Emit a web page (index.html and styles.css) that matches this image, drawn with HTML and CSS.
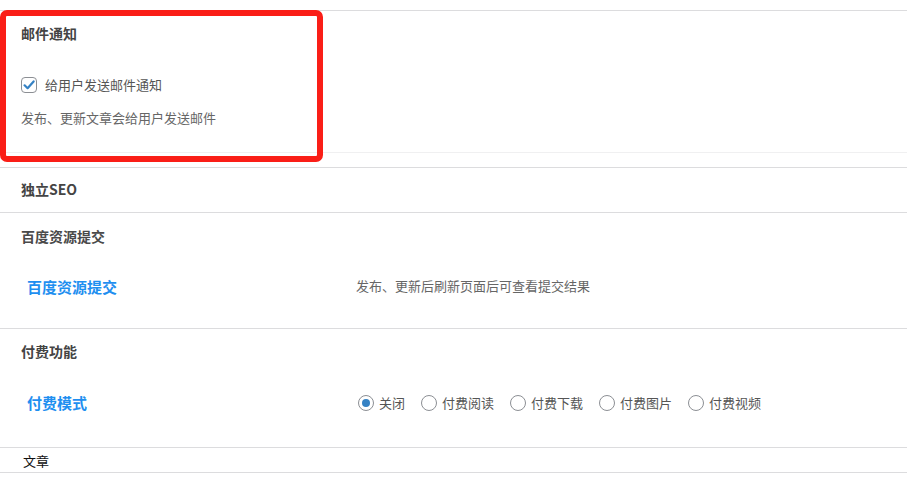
FILE: index.html
```html
<!DOCTYPE html>
<html lang="zh-CN">
<head>
<meta charset="utf-8">
<title>文章设置</title>
<link rel="stylesheet" href="styles.css">
</head>
<body>
<div class="page">
  <section class="box box-mail">
    <div class="mail-inner">
      <h3 class="box-title">邮件通知</h3>
      <label class="check-row">
        <span class="checkbox"><svg width="12" height="12" viewBox="0 0 12 12"><path d="M1.6 6.3 L4.6 9.2 L10.6 2.4" fill="none" stroke="#3582c4" stroke-width="2.2" stroke-linecap="round" stroke-linejoin="round"/></svg></span>
        <span class="check-label">给用户发送邮件通知</span>
      </label>
      <p class="desc">发布、更新文章会给用户发送邮件</p>
    </div>
    <div class="highlight"></div>
  </section>

  <section class="box box-seo">
    <h3 class="box-title">独立SEO</h3>
  </section>

  <section class="box box-baidu">
    <h3 class="box-title title-light">百度资源提交</h3>
    <div class="field-row">
      <div class="field-label">百度资源提交</div>
      <div class="field-value desc">发布、更新后刷新页面后可查看提交结果</div>
    </div>
  </section>

  <section class="box box-pay">
    <h3 class="box-title">付费功能</h3>
    <div class="field-row">
      <div class="field-label">付费模式</div>
      <div class="field-value radios">
        <label class="radio-item"><span class="radio checked"></span><span>关闭</span></label>
        <label class="radio-item"><span class="radio"></span><span>付费阅读</span></label>
        <label class="radio-item"><span class="radio"></span><span>付费下载</span></label>
        <label class="radio-item"><span class="radio"></span><span>付费图片</span></label>
        <label class="radio-item"><span class="radio"></span><span>付费视频</span></label>
      </div>
    </div>
  </section>

  <section class="box box-article">
    <div class="article-title">文章</div>
  </section>
</div>
</body>
</html>
```

FILE: styles.css
```css
* { box-sizing: border-box; }
html, body {
  margin: 0;
  padding: 0;
  background: #fff;
}
body {
  font-family: "Noto Sans CJK SC", "Microsoft YaHei", sans-serif;
  font-size: 13px;
  line-height: 20px;
  color: #555;
}
.page {
  padding-top: 10px;
}
.box {
  border-top: 1px solid #dcdcde;
  padding-left: 21px;
}
.box-title {
  margin: 0;
  font-size: 14px;
  line-height: 20px;
  font-weight: 700;
  color: #444;
}
.title-light {
  font-weight: 600;
  color: #4a4a4a;
}
.desc {
  margin: 0;
  color: #666;
  font-size: 13px;
  line-height: 20px;
}

/* mail */
.box-mail {
  position: relative;
  padding-left: 0;
  padding-bottom: 14px;
}
.mail-inner {
  padding: 12px 0 24px 21px;
  border-bottom: 1px solid #f0f0f1;
}
.check-row {
  display: flex;
  align-items: center;
  gap: 8px;
  margin-top: 32px;
  height: 20px;
  color: #555;
}
.checkbox {
  width: 16px;
  height: 16px;
  border: 1px solid #8c8f94;
  border-radius: 4px;
  display: flex;
  align-items: center;
  justify-content: center;
  background: #fff;
}
.check-row + .desc {
  margin-top: 13px;
}
.highlight {
  position: absolute;
  left: 0;
  top: -1px;
  width: 323px;
  height: 152px;
  border: 6px solid #fa1e17;
  border-radius: 7px;
  pointer-events: none;
}

/* seo */
.box-seo {
  padding-top: 11px;
  padding-bottom: 13px;
}

/* rows */
.field-row {
  display: grid;
  grid-template-columns: 329px 1fr;
  padding-left: 6px;
  align-items: center;
}
.field-label {
  font-size: 15px;
  line-height: 20px;
  font-weight: 700;
  color: #1f8ff0;
}
.box-baidu {
  padding-top: 13px;
  padding-bottom: 31px;
}
.box-baidu .field-row {
  margin-top: 31px;
}
.box-baidu .field-value {
  position: relative;
  top: -1px;
}

.box-pay {
  padding-top: 12px;
  padding-bottom: 34px;
}
.box-pay .field-row {
  margin-top: 32px;
}
.radios {
  display: flex;
  align-items: center;
  gap: 16px;
  padding-left: 2px;
  color: #555;
}
.radio-item {
  display: flex;
  align-items: center;
  gap: 5px;
}
.radio {
  width: 16px;
  height: 16px;
  border: 1px solid #8c8f94;
  border-radius: 50%;
  display: flex;
  align-items: center;
  justify-content: center;
  background: #fff;
}
.radio.checked::after {
  content: "";
  width: 8px;
  height: 8px;
  border-radius: 50%;
  background: #3582c4;
}

/* article */
.box-article {
  padding: 3px 0 1px 23px;
  border-bottom: 1px solid #dcdcde;
}
.article-title {
  color: #111;
  font-size: 13px;
  font-weight: 400;
  line-height: 20px;
}
```
